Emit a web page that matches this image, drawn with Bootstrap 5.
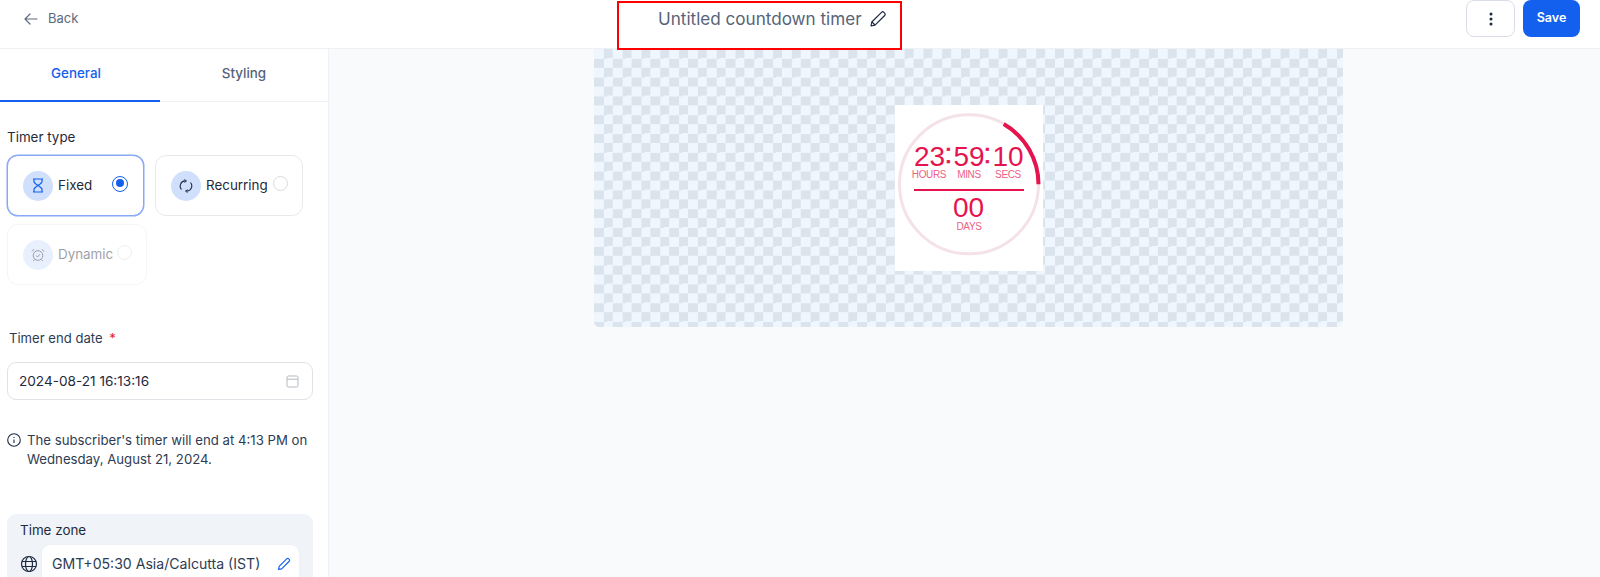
<!DOCTYPE html>
<html lang="en">
<head>
<meta charset="utf-8">
<title>Untitled countdown timer</title>
<link href="https://cdn.jsdelivr.net/npm/bootstrap@5.3.0/dist/css/bootstrap.min.css" rel="stylesheet">
<style>
html,body{height:100%;overflow:hidden}
body{font-family:Inter,"Liberation Sans",sans-serif;font-size:13.4px;color:#1f2a3c;background:#f9fafc}
.top-bar{height:49px;background:#fff;border-bottom:1px solid #eef0f4;padding-right:20px}
.back-zone{width:658px;height:37px;padding-left:24px;color:#5c6a80;gap:10px;font-size:13px}
.title-zone{height:37px;color:#566379;font-size:17.1px;gap:7px}
.title-box{position:absolute;left:617px;top:1px;width:285px;height:49px;border:2px solid #f00;pointer-events:none}
.kebab{width:49px;height:37px;border:1px solid #d9dde6;border-radius:8px;background:#fff;padding:0}
.save-btn{width:57px;height:37px;background:#1360ef;border:0;border-radius:8px;color:#fff;font-size:12.5px;font-weight:600;padding:0;margin-left:8px}
.side-panel{width:329px;flex:none;background:#fff;border-right:1px solid #eef0f4;height:528px;overflow:hidden}
.tab-row{height:53px;border-bottom:1px solid #eef0f4}
.tab-item{width:160px;font-weight:500;color:#566379;padding-bottom:3px}
.tab-on{color:#1360ef;border-bottom:2px solid #1360ef;margin-bottom:-1px;padding-right:8px}
.tab-off{padding-left:8px}
.side-body{padding:26px 16px 0 7px}
.field-label{line-height:18px}
.type-grid{gap:8px 11px;margin-top:9px;flex-wrap:wrap;width:310px}
.type-card{height:61px;border:1px solid #e8e9ec;border-radius:11px;padding:0 0 0 15px;background:#fff}
.type-fixed{width:137px;border-color:#88a8f6;box-shadow:0 0 0 .5px #88a8f6}
.type-rec{width:148px}
.type-dyn{width:140px;opacity:.45}
.type-icon{width:30px;height:30px;border-radius:50%;background:#d0dffc;margin-right:5px;flex:none;color:#1c2a44}
.type-radio{width:15px;height:15px;border-radius:50%;border:1px solid #d9dbdf;background:#fff;position:relative;top:-2px}
.type-fixed .type-radio{border:1.5px solid #1360ef;margin-left:20px;width:16px;height:16px}
.type-fixed .type-radio::after{content:"";display:block;width:8px;height:8px;border-radius:50%;background:#1360ef;margin:2.5px}
.type-rec .type-radio{margin-left:5px}
.type-dyn .type-radio{margin-left:4px}
.end-label{margin:44px 0 0 2px;line-height:18px;color:#2e3c52;font-size:13.1px}
.req-star{color:#e11d2a;margin-left:3px}
.date-box{height:38px;margin-top:15px;border:1px solid #dfe2e7;border-radius:9px;padding:0 13px 0 11px;width:306px;background:#fff;font-size:13.6px}
.note-row{margin-top:31px;gap:6px;line-height:19px;color:#2e3c52;width:306px;font-size:13.2px}
.note-row svg{margin-top:2px;flex:none}
.zone-panel{margin-top:45px;width:306px;background:#f0f3f7;border-radius:9px;padding:7px 13px 40px}
.zone-input{height:38px;background:#fff;border-radius:8px;padding:0 8px 0 10px;width:257px;color:#2e3c52;box-shadow:0 0 1px #d9dde6;font-size:14.1px}
.zone-row{margin-top:6px;gap:4px}
.canvas-area{flex:1;min-width:0}
.check-board{width:749px;height:278px;margin-left:265px;border-radius:0 0 5px 5px;background-color:#eff6fe;
background-image:conic-gradient(#dbe3ec 25%,transparent 0 50%,#dbe3ec 0 75%,transparent 0);background-size:18.8px 18.8px;background-position:0 0;padding:56px 0 0 301px}
.timer-tile{width:148px;height:166px;background:#fff;display:block}
.timer-tile text{font-family:"Liberation Sans",Arial,sans-serif;fill:#e5144f;text-anchor:middle}
.timer-tile .tiny{font-size:10px;letter-spacing:-.35px;fill:#ec5f85}
.timer-tile .dots{stroke:#e5144f;stroke-width:.5}
</style>
</head>
<body>
<header class="top-bar d-flex align-items-start position-relative">
  <div class="back-zone d-flex align-items-center">
    <svg width="14" height="12" viewBox="0 0 14 12" fill="none" stroke="currentColor" stroke-width="1.2" stroke-linecap="round" stroke-linejoin="round"><path d="M13 6H1M6 1 1 6l5 5"/></svg>
    <span>Back</span>
  </div>
  <div class="title-zone d-flex align-items-center">
    <span>Untitled countdown timer</span>
    <svg width="18" height="18" viewBox="0 0 18 18" fill="none" stroke="#1c2a44" stroke-width="1.2" stroke-linejoin="round"><path d="M2 16l.8-4L12.5 2.300a1.700 1.700 0 0 1 2.400 0l.8.800a1.700 1.700 0 0 1 0 2.400L6 15.200z"/><path d="M3 12l3 3"/></svg>
  </div>
  <div class="ms-auto d-flex">
    <button class="kebab btn d-flex align-items-center justify-content-center" type="button" aria-label="More">
      <svg width="4" height="14" viewBox="0 0 4 14" fill="#1c2a44"><circle cx="2" cy="2" r="1.500"/><circle cx="2" cy="7" r="1.500"/><circle cx="2" cy="12" r="1.500"/></svg>
    </button>
    <button class="save-btn btn" type="button">Save</button>
  </div>
  <div class="title-box"></div>
</header>
<div class="d-flex">
  <aside class="side-panel">
    <div class="tab-row d-flex">
      <div class="tab-item tab-on d-flex align-items-center justify-content-center">General</div>
      <div class="tab-item tab-off d-flex align-items-center justify-content-center">Styling</div>
    </div>
    <div class="side-body">
      <div class="field-label">Timer type</div>
      <div class="type-grid d-flex">
        <div class="type-card type-fixed d-flex align-items-center">
          <span class="type-icon d-flex align-items-center justify-content-center"><svg width="12" height="15" viewBox="0 0 12 15" fill="none" stroke="#1360ef" stroke-width="1.200"><path d="M1 1h10M1 14h10M2 1v2.500c0 1.500 2.500 3 4 4 1.500-1 4-2.500 4-4V1M2 14v-2.500c0-1.500 2.500-3 4-4 1.500 1 4 2.500 4 4V14"/></svg></span>
          <span>Fixed</span>
          <span class="type-radio"></span>
        </div>
        <div class="type-card type-rec d-flex align-items-center">
          <span class="type-icon d-flex align-items-center justify-content-center"><svg width="14" height="14" viewBox="0 0 14 14" fill="none" stroke="#1c2a44" stroke-width="1.100"><path d="M2.500 10.500A5.200 5.200 0 0 1 6 1.900M11.500 3.500A5.200 5.200 0 0 1 8 12.100"/><path d="M5.500.500 7.500 2 5.500 3.400M8.500 10.700 6.500 12.100l2 1.400" stroke-width="1"/></svg></span>
          <span>Recurring</span>
          <span class="type-radio"></span>
        </div>
        <div class="type-card type-dyn d-flex align-items-center">
          <span class="type-icon d-flex align-items-center justify-content-center"><svg width="14" height="14" viewBox="0 0 14 14" fill="none" stroke="#1c2a44" stroke-width="1"><circle cx="7" cy="7.500" r="4.800"/><path d="M5 7.500l1.500 1.500L9 6.200M1 3.500 3 1.200M13 3.500 11 1.200M3.500 11.500 2.300 13M10.500 11.500 11.700 13"/></svg></span>
          <span>Dynamic</span>
          <span class="type-radio"></span>
        </div>
      </div>
      <div class="end-label">Timer end date <span class="req-star">*</span></div>
      <div class="date-box d-flex align-items-center justify-content-between">
        <span>2024-08-21 16:13:16</span>
        <svg width="13" height="13" viewBox="0 0 13 13" fill="none" stroke="#b4b9c2" stroke-width="1"><rect x="1" y="1" width="11" height="11" rx="1.500"/><path d="M1 4.200h11"/></svg>
      </div>
      <div class="note-row d-flex">
        <svg width="14" height="14" viewBox="0 0 14 14" fill="none" stroke="#1c2a44" stroke-width="1.100"><circle cx="7" cy="7" r="6.300"/><path d="M7 6.500v3.500M7 4v.9"/></svg>
        <div>The subscriber's timer will end at 4:13 PM on Wednesday, August 21, 2024.</div>
      </div>
      <div class="zone-panel">
        <div class="field-label">Time zone</div>
        <div class="zone-row d-flex align-items-center">
          <svg width="18" height="18" viewBox="0 0 18 18" fill="none" stroke="#1c2a44" stroke-width="1.200"><circle cx="9" cy="9" r="7.500"/><ellipse cx="9" cy="9" rx="3.500" ry="7.500"/><path d="M2 6.500h14M2 11.500h14"/></svg>
          <div class="zone-input d-flex align-items-center justify-content-between">
            <span>GMT+05:30 Asia/Calcutta (IST)</span>
            <svg width="14" height="14" viewBox="0 0 18 18" fill="none" stroke="#1360ef" stroke-width="1.500" stroke-linejoin="round"><path d="M2 16l.8-4L12.500 2.300a1.700 1.700 0 0 1 2.400 0l.8.800a1.700 1.700 0 0 1 0 2.400L6 15.200z"/></svg>
          </div>
        </div>
      </div>
    </div>
  </aside>
  <main class="canvas-area">
    <div class="check-board">
      <svg class="timer-tile" viewBox="1 0 148 166" width="148" height="166">
        <circle cx="75" cy="79.300" r="69.500" fill="none" stroke="#f4e2e7" stroke-width="3"/>
        <path d="M109.700 19.100A69.500 69.500 0 0 1 144.500 79.300" fill="none" stroke="#e5144f" stroke-width="4"/>
        <text x="35.500" y="61" font-size="28">23</text>
        <text class="dots" x="54.500" y="58" font-size="28">:</text>
        <text x="75" y="61" font-size="28">59</text>
        <text class="dots" x="93.500" y="58" font-size="28">:</text>
        <text x="114" y="61" font-size="28">10</text>
        <text class="tiny" x="35" y="73">HOURS</text>
        <text class="tiny" x="75" y="73">MINS</text>
        <text class="tiny" x="114" y="73">SECS</text>
        <rect x="20" y="84" width="110" height="2" fill="#e5144f"/>
        <text x="74.500" y="112" font-size="28">00</text>
        <text class="tiny" x="75" y="125">DAYS</text>
      </svg>
    </div>
  </main>
</div>
<script src="https://cdn.jsdelivr.net/npm/bootstrap@5.3.0/dist/js/bootstrap.bundle.min.js"></script>
</body>
</html>
